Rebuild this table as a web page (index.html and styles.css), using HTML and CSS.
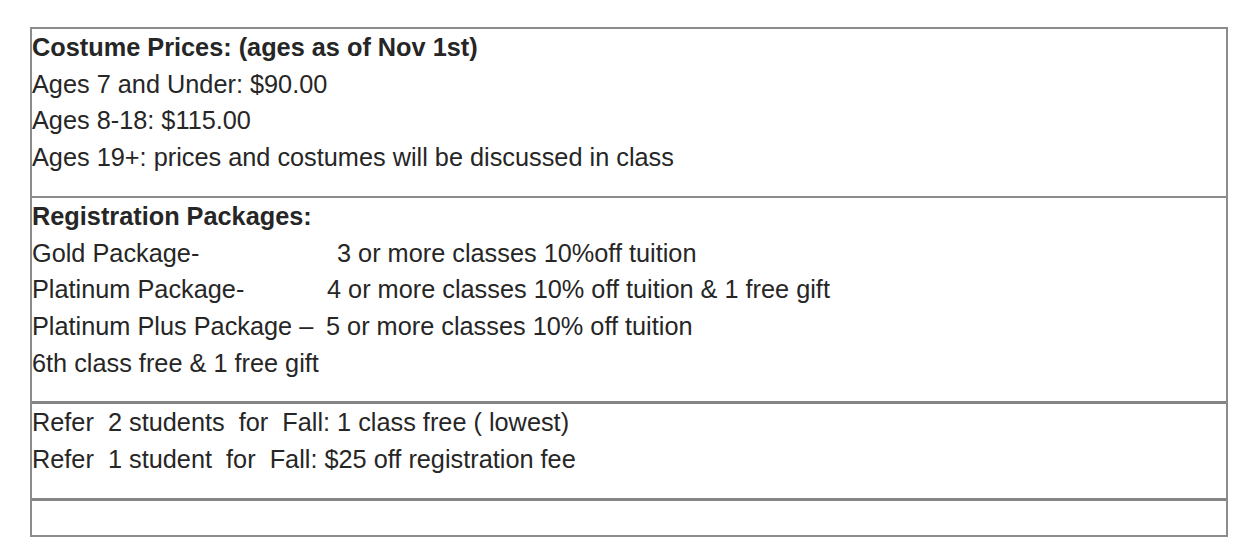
FILE: index.html
```html
<!DOCTYPE html>
<html lang="en">
<head>
<meta charset="utf-8">
<title>Prices</title>
<link rel="stylesheet" href="styles.css">
</head>
<body>
<div class="box">
  <div class="cell">
    <div class="line bold">Costume Prices: (ages as of Nov 1st)</div>
    <div class="line">Ages 7 and Under: $90.00</div>
    <div class="line">Ages 8-18: $115.00</div>
    <div class="line">Ages 19+: prices and costumes will be discussed in class</div>
  </div>
  <div class="cell sep2">
    <div class="line bold">Registration Packages:</div>
    <div class="line"><span class="lbl lbl-gold">Gold Package-</span>3 or more classes 10%off tuition</div>
    <div class="line"><span class="lbl lbl-plat">Platinum Package-</span>4 or more classes 10% off tuition &amp; 1 free gift</div>
    <div class="line"><span class="lbl lbl-plus">Platinum Plus Package –</span>5 or more classes 10% off tuition</div>
    <div class="line">6th class free &amp; 1 free gift</div>
  </div>
  <div class="cell sep3">
    <div class="line pre">Refer  2 students  for  Fall: 1 class free ( lowest)</div>
    <div class="line pre">Refer  1 student  for  Fall: $25 off registration fee</div>
  </div>
  <div class="cell sep3 empty"></div>
</div>
</body>
</html>
```

FILE: styles.css
```css
html, body {
  margin: 0;
  padding: 0;
  background: #ffffff;
}

body {
  font-family: "Liberation Sans", Arial, sans-serif;
  font-size: 25.3px;
  color: #262626;
}

.box {
  box-sizing: border-box;
  width: 1198px;
  margin: 27px 0 0 30px;
  border: 2px solid #8c8c8c;
}

.cell {
  padding: 0 0 20px 0;
}

.sep2 {
  border-top: 2px solid #8c8c8c;
}

.sep3 {
  border-top: 3px solid #858585;
}

.empty {
  height: 37px;
  padding: 0;
  box-sizing: border-box;
}

.line {
  line-height: 36.7px;
  white-space: nowrap;
}

.bold {
  font-weight: bold;
}

.pre {
  white-space: pre;
}

.lbl {
  display: inline-block;
}

.lbl-gold {
  width: 305px;
}

.lbl-plat {
  width: 295px;
}

.lbl-plus {
  width: 294px;
}
```
